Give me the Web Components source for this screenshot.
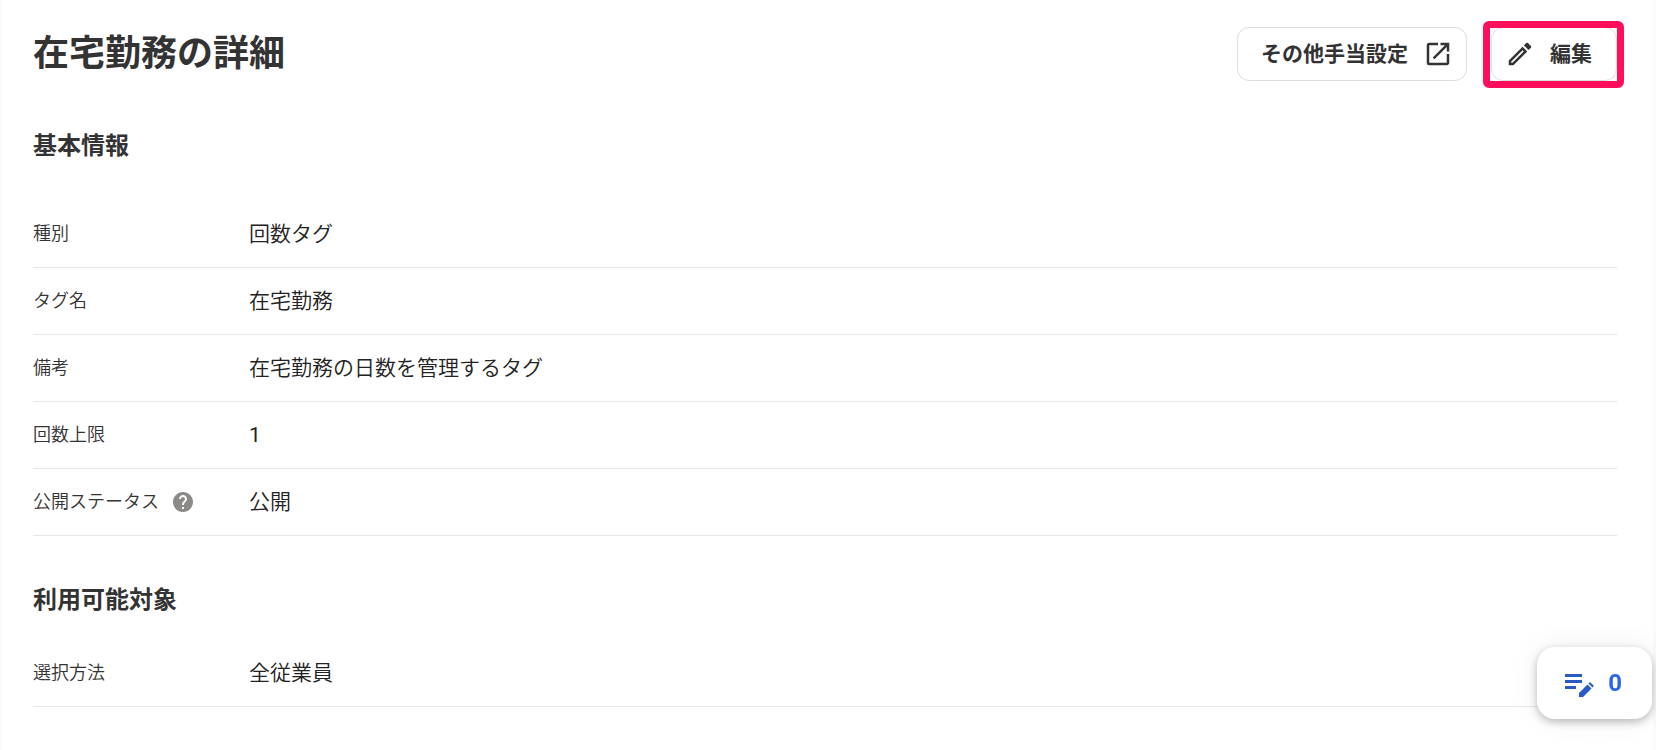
<!DOCTYPE html>
<html lang="ja">
<head>
<meta charset="utf-8">
<title>在宅勤務の詳細</title>
<style>
html { background: #fafafa; }
body { margin: 0; color: #333; font-family: Roboto, "Noto Sans CJK JP", sans-serif; }
</style>
</head>
<body>
<tag-detail-page>
  <page-header slot="header" heading="在宅勤務の詳細">
    <action-button label="その他手当設定" icon="open" icon-end></action-button>
    <action-button label="編集" icon="edit" highlighted></action-button>
  </page-header>
  <info-section heading="基本情報" spaced>
    <info-row label="種別">回数タグ</info-row>
    <info-row label="タグ名">在宅勤務</info-row>
    <info-row label="備考">在宅勤務の日数を管理するタグ</info-row>
    <info-row label="回数上限" numeric>1</info-row>
    <info-row label="公開ステータス" help>公開</info-row>
  </info-section>
  <info-section heading="利用可能対象">
    <info-row label="選択方法">全従業員</info-row>
  </info-section>
</tag-detail-page>
<draft-counter count="0"></draft-counter>

<script>
const icons = {
  open: '<path d="M19 19H5V5h7V3H5a2 2 0 0 0-2 2v14a2 2 0 0 0 2 2h14c1.100 0 2-.9 2-2v-7h-2v7zM14 3v2h3.590l-9.830 9.830 1.410 1.410L19 6.410V10h2V3h-7z"/>',
  edit: '<path d="M14.060 9.020l.92.92L5.920 19H5v-.92l9.060-9.060M17.660 3c-.25 0-.51.100-.7.290l-1.830 1.830 3.750 3.750 1.830-1.830c.39-.39.39-1.020 0-1.410l-2.340-2.340c-.2-.2-.45-.29-.71-.29zm-3.600 3.190L3 17.250V21h3.750L17.810 9.940l-3.750-3.750z"/>',
  help: '<path d="M12 2C6.480 2 2 6.480 2 12s4.480 10 10 10 10-4.480 10-10S17.520 2 12 2zm1 17h-2v-2h2v2zm2.070-7.750l-.9.920C13.450 12.900 13 13.500 13 15h-2v-.5c0-1.100.45-2.100 1.170-2.830l1.240-1.260c.37-.36.59-.86.59-1.410 0-1.100-.9-2-2-2s-2 .9-2 2H8c0-2.210 1.790-4 4-4s4 1.790 4 4c0 .88-.36 1.680-.93 2.250z"/>'
};
const svg = (name) => `<svg viewBox="0 0 24 24" aria-hidden="true">${icons[name]}</svg>`;

class TagDetailPage extends HTMLElement {
  connectedCallback() {
    this.attachShadow({ mode: 'open' }).innerHTML = `
      <style>
        :host { display: block; min-height: 100vh; box-sizing: border-box; margin: 0 3px 0 2px; padding: 27px 36px 40px 31px; background: #fff; }
        main { display: block; }
      </style>
      <slot name="header"></slot>
      <main><slot></slot></main>`;
  }
}

class PageHeader extends HTMLElement {
  connectedCallback() {
    this.attachShadow({ mode: 'open' }).innerHTML = `
      <style>
        :host { display: block; }
        header { display: flex; align-items: flex-start; justify-content: space-between; }
        h1 { margin: 0; padding-bottom: 1px; font-size: 36px; line-height: 54px; font-weight: 700; }
        .actions { display: flex; gap: 24px; }
      </style>
      <header><h1>${this.getAttribute('heading')}</h1><div class="actions"><slot></slot></div></header>`;
  }
}

class ActionButton extends HTMLElement {
  connectedCallback() {
    this.attachShadow({ mode: 'open' }).innerHTML = `
      <style>
        :host { display: block; position: relative; }
        button { display: flex; align-items: center; gap: 15px; box-sizing: border-box; height: 54px; padding: 0 13px; border: 1px solid #ddd; border-radius: 12px; background: #fff; color: #333; font: 700 21px/30px Roboto, "Noto Sans CJK JP", sans-serif; cursor: pointer; }
        :host([icon-end]) button { flex-direction: row-reverse; padding-left: 23px; }
        :host([highlighted]) button { padding-right: 24px; }
        :host([highlighted])::after { content: ""; position: absolute; inset: -6px -7px -7px -8px; border: 7px solid #ff0f5b; border-radius: 6px; pointer-events: none; }
        svg { width: 30px; height: 30px; fill: currentColor; }
      </style>
      <button type="button">${svg(this.getAttribute('icon'))}<span>${this.getAttribute('label')}</span></button>`;
  }
}

class InfoSection extends HTMLElement {
  connectedCallback() {
    this.attachShadow({ mode: 'open' }).innerHTML = `
      <style>
        :host { display: block; padding-top: 44px; }
        h2 { margin: 0 0 20px; font-size: 24px; line-height: 40px; font-weight: 700; }
        :host([spaced]) h2 { margin-bottom: 35px; }
      </style>
      <section><h2>${this.getAttribute('heading')}</h2><slot></slot></section>`;
  }
}

class InfoRow extends HTMLElement {
  connectedCallback() {
    const help = this.hasAttribute('help') ? `<button type="button" aria-label="ヘルプ">${svg('help')}</button>` : '';
    this.attachShadow({ mode: 'open' }).innerHTML = `
      <style>
        :host { display: block; border-bottom: 1px solid #e6e6e6; }
        dl { display: grid; grid-template-columns: 216px 1fr; align-items: center; margin: 0; min-height: 66px; }
        dt { display: flex; align-items: center; gap: 12px; font-size: 18px; line-height: 30px; font-weight: 350; color: #333; }
        dd { margin: 0; font-size: 21px; line-height: 30px; font-weight: 350; color: #222; }
        :host([numeric]) dd { font-weight: 400; }
        button { display: flex; padding: 0; border: 0; background: none; color: #8c8989; cursor: pointer; }
        svg { width: 24px; height: 24px; fill: currentColor; }
      </style>
      <dl><dt>${this.getAttribute('label')}${help}</dt><dd><slot></slot></dd></dl>`;
  }
}

class DraftCounter extends HTMLElement {
  connectedCallback() {
    this.attachShadow({ mode: 'open' }).innerHTML = `
      <style>
        :host { display: block; position: fixed; right: 4px; bottom: 31px; }
        button { display: flex; align-items: center; gap: 13px; box-sizing: border-box; height: 72px; padding: 0 30px 0 24px; border: 0; border-radius: 18px; background: #fff; color: #2864f0; font: 700 24px/36px Roboto, sans-serif; box-shadow: 0 3px 8px rgba(0,0,0,.26), 0 0 28px rgba(0,0,0,.07); cursor: pointer; }
        svg { width: 34px; height: 36px; fill: #285ac8; }
      </style>
      <button type="button" aria-label="下書き">
        <svg viewBox="0 0 34 36" aria-hidden="true"><path d="M4 9h17v3H4zM4 15h17v3H4zM4 21h11v3H4zM18 32v-4l8.500-8.500 4 4L22 32zM27.500 18.500l.8-.8q.7-.7 1.400 0l2.600 2.600q.7.700 0 1.400l-.8.800z"/></svg>
        <span>${this.getAttribute('count')}</span>
      </button>`;
  }
}

customElements.define('tag-detail-page', TagDetailPage);
customElements.define('page-header', PageHeader);
customElements.define('action-button', ActionButton);
customElements.define('info-section', InfoSection);
customElements.define('info-row', InfoRow);
customElements.define('draft-counter', DraftCounter);
</script>
</body>
</html>
